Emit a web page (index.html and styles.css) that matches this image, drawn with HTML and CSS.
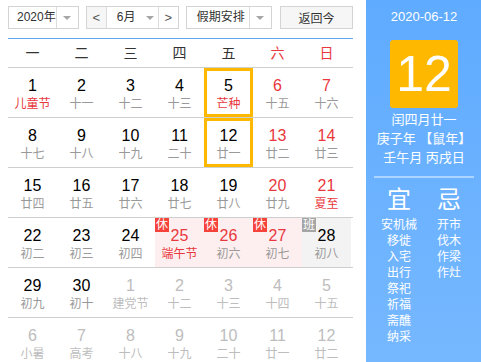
FILE: index.html
```html
<!DOCTYPE html>
<html lang="zh-CN">
<head>
    <meta charset="UTF-8">
    <title>万年历</title>
    <link rel="stylesheet" href="styles.css">
</head>
<body>
    <div class="calendar">
        <div class="main">
            <div class="toolbar">
                <div class="select year">
                    <span class="val">2020年</span>
                    <span class="arrow"></span>
                </div>
                <div class="month-group">
                    <span class="nav prev">&lt;</span>
                    <div class="month">
                        <span class="val">6月</span>
                        <span class="caret"></span>
                    </div>
                    <span class="nav next">&gt;</span>
                </div>
                <div class="select holiday">
                    <span class="val">假期安排</span>
                    <span class="arrow"></span>
                </div>
                <button class="today-btn">返回今</button>
            </div>

            <div class="weekdays">
                <span>一</span><span>二</span><span>三</span><span>四</span><span>五</span>
                <span class="red">六</span><span class="red">日</span>
            </div>

            <div class="week">
                <div class="day"><div class="num">1</div><div class="lunar fest">儿童节</div></div>
                <div class="day"><div class="num">2</div><div class="lunar">十一</div></div>
                <div class="day"><div class="num">3</div><div class="lunar">十二</div></div>
                <div class="day"><div class="num">4</div><div class="lunar">十三</div></div>
                <div class="day sel"><div class="num">5</div><div class="lunar fest">芒种</div></div>
                <div class="day weekend"><div class="num">6</div><div class="lunar">十五</div></div>
                <div class="day weekend"><div class="num">7</div><div class="lunar">十六</div></div>
            </div>
            <div class="week">
                <div class="day"><div class="num">8</div><div class="lunar">十七</div></div>
                <div class="day"><div class="num">9</div><div class="lunar">十八</div></div>
                <div class="day"><div class="num">10</div><div class="lunar">十九</div></div>
                <div class="day"><div class="num">11</div><div class="lunar">二十</div></div>
                <div class="day sel"><div class="num">12</div><div class="lunar">廿一</div></div>
                <div class="day weekend"><div class="num">13</div><div class="lunar">廿二</div></div>
                <div class="day weekend"><div class="num">14</div><div class="lunar">廿三</div></div>
            </div>
            <div class="week">
                <div class="day"><div class="num">15</div><div class="lunar">廿四</div></div>
                <div class="day"><div class="num">16</div><div class="lunar">廿五</div></div>
                <div class="day"><div class="num">17</div><div class="lunar">廿六</div></div>
                <div class="day"><div class="num">18</div><div class="lunar">廿七</div></div>
                <div class="day"><div class="num">19</div><div class="lunar">廿八</div></div>
                <div class="day weekend"><div class="num">20</div><div class="lunar">廿九</div></div>
                <div class="day weekend"><div class="num">21</div><div class="lunar fest">夏至</div></div>
            </div>
            <div class="week">
                <div class="day"><div class="num">22</div><div class="lunar">初二</div></div>
                <div class="day"><div class="num">23</div><div class="lunar">初三</div></div>
                <div class="day"><div class="num">24</div><div class="lunar">初四</div></div>
                <div class="day rest"><span class="badge">休</span><div class="num">25</div><div class="lunar fest">端午节</div></div>
                <div class="day rest"><span class="badge">休</span><div class="num">26</div><div class="lunar">初六</div></div>
                <div class="day rest"><span class="badge">休</span><div class="num">27</div><div class="lunar">初七</div></div>
                <div class="day work"><span class="badge">班</span><div class="num">28</div><div class="lunar">初八</div></div>
            </div>
            <div class="week">
                <div class="day"><div class="num">29</div><div class="lunar">初九</div></div>
                <div class="day"><div class="num">30</div><div class="lunar">初十</div></div>
                <div class="day other"><div class="num">1</div><div class="lunar">建党节</div></div>
                <div class="day other"><div class="num">2</div><div class="lunar">十二</div></div>
                <div class="day other"><div class="num">3</div><div class="lunar">十三</div></div>
                <div class="day other"><div class="num">4</div><div class="lunar">十四</div></div>
                <div class="day other"><div class="num">5</div><div class="lunar">十五</div></div>
            </div>
            <div class="week">
                <div class="day other"><div class="num">6</div><div class="lunar">小暑</div></div>
                <div class="day other"><div class="num">7</div><div class="lunar">高考</div></div>
                <div class="day other"><div class="num">8</div><div class="lunar">十八</div></div>
                <div class="day other"><div class="num">9</div><div class="lunar">十九</div></div>
                <div class="day other"><div class="num">10</div><div class="lunar">二十</div></div>
                <div class="day other"><div class="num">11</div><div class="lunar">廿一</div></div>
                <div class="day other"><div class="num">12</div><div class="lunar">廿二</div></div>
            </div>
        </div>

        <div class="side">
            <div class="date">2020-06-12</div>
            <div class="big-day">12</div>
            <div class="info">
                <p>闰四月廿一</p>
                <p>庚子年 【鼠年】</p>
                <p>壬午月 丙戌日</p>
            </div>
            <div class="divider"></div>
            <div class="yiji">
                <div class="col">
                    <div class="head">宜</div>
                    <p>安机械</p>
                    <p>移徙</p>
                    <p>入宅</p>
                    <p>出行</p>
                    <p>祭祀</p>
                    <p>祈福</p>
                    <p>斋醮</p>
                    <p>纳采</p>
                </div>
                <div class="col">
                    <div class="head">忌</div>
                    <p>开市</p>
                    <p>伐木</p>
                    <p>作梁</p>
                    <p>作灶</p>
                </div>
            </div>
        </div>
    </div>
</body>
</html>
```

FILE: styles.css
```css
* {
    box-sizing: border-box;
    margin: 0;
    padding: 0;
}

body {
    font-family: "Liberation Sans", "Noto Sans CJK SC", sans-serif;
    color: #333;
    background: #fff;
    overflow: hidden;
}

.calendar {
    display: flex;
    height: 362px;
}

/* ---- left part ---- */

.main {
    width: 366px;
    padding: 0 13px 0 8px;
}

.toolbar {
    display: flex;
    align-items: flex-start;
    height: 39px;
    padding-top: 6px;
    border-bottom: 1px solid #5ea8f6;
    font-size: 12px;
}

.select {
    display: flex;
    height: 23px;
    border: 1px solid #d4d4d4;
    background: #fff;
}

.select .val {
    flex: 1;
    line-height: 21px;
    text-align: center;
    white-space: nowrap;
    overflow: hidden;
}

.select .arrow {
    width: 22px;
    border-left: 1px solid #dcdcdc;
    display: flex;
    align-items: center;
    justify-content: center;
}

.select .arrow::after,
.month .caret::after {
    content: "";
    border-left: 4px solid transparent;
    border-right: 4px solid transparent;
    border-top: 4px solid #a6a6a6;
}

.year {
    width: 71px;
}

.year .val {
    padding-left: 8px;
}

.month-group {
    display: flex;
    width: 94px;
    height: 23px;
    margin-left: 7px;
    border: 1px solid #d4d4d4;
}

.nav {
    width: 20px;
    line-height: 21px;
    text-align: center;
    color: #555;
    font-size: 13px;
}

.prev {
    background: #f6f6f6;
    border-right: 1px solid #dcdcdc;
}

.next {
    border-left: 1px solid #dcdcdc;
}

.month {
    flex: 1;
    display: flex;
    align-items: center;
}

.month .val {
    flex: 1;
    text-align: center;
    padding-left: 4px;
    line-height: 21px;
}

.month .caret {
    width: 16px;
    display: flex;
    justify-content: center;
}

.holiday {
    width: 87px;
    margin-left: 7px;
}

.holiday .val {
    text-align: left;
    padding-left: 10px;
}

.today-btn {
    width: 74px;
    height: 23px;
    margin-left: 8px;
    border: 1px solid #d4d4d4;
    background: #f6f6f6;
    color: #333;
    font: inherit;
    font-size: 12px;
}

.weekdays {
    display: flex;
    height: 29px;
    border-bottom: 1px solid #cfcfcf;
    font-size: 14px;
}

.weekdays span {
    width: 49px;
    line-height: 28px;
    text-align: center;
}

.red {
    color: #e8383d;
}

.week {
    display: flex;
    height: 50px;
    border-bottom: 1px solid #cfcfcf;
}

.day {
    position: relative;
    width: 49px;
    height: 49px;
    padding-top: 9px;
    text-align: center;
}

.num {
    font-size: 16px;
    line-height: 18px;
    color: #000;
}

.lunar {
    margin-top: 1px;
    font-size: 12px;
    line-height: 16px;
    color: #999;
}

.lunar.fest,
.weekend .num,
.rest .num {
    color: #e8383d;
}

.sel {
    border: 3px solid #ffb800;
    padding-top: 6px;
}

.rest {
    background: #fdefef;
}

.work {
    background: #f3f3f3;
}

.badge {
    position: absolute;
    top: 0;
    left: 0;
    width: 14px;
    height: 14px;
    font-size: 12px;
    line-height: 14px;
    color: #fff;
    background: #f5433b;
}

.work .badge {
    background: #a5a5a5;
}

.other .num,
.other .lunar {
    color: #bdbdbd;
}

/* ---- right part ---- */

.side {
    flex: 1;
    padding: 10px 8px 0;
    background: linear-gradient(#5fabff, #76b8ff);
    color: #fff;
    text-align: center;
}

.date {
    font-size: 13px;
    line-height: 14px;
}

.big-day {
    width: 68px;
    height: 68px;
    margin: 16px auto 0;
    border-radius: 3px;
    background: #ffb800;
    font-size: 50px;
    line-height: 68px;
}

.info {
    margin-top: 2px;
    font-size: 13px;
    line-height: 19px;
}

.divider {
    height: 2px;
    margin-top: 9px;
    background: rgba(255, 255, 255, 0.45);
}

.yiji {
    display: grid;
    grid-template-columns: 50px 50px;
    margin-top: 8px;
}

.yiji .head {
    font-size: 24px;
    line-height: 28px;
    margin-bottom: 3px;
}

.yiji p {
    font-size: 12px;
    line-height: 16px;
}
```
